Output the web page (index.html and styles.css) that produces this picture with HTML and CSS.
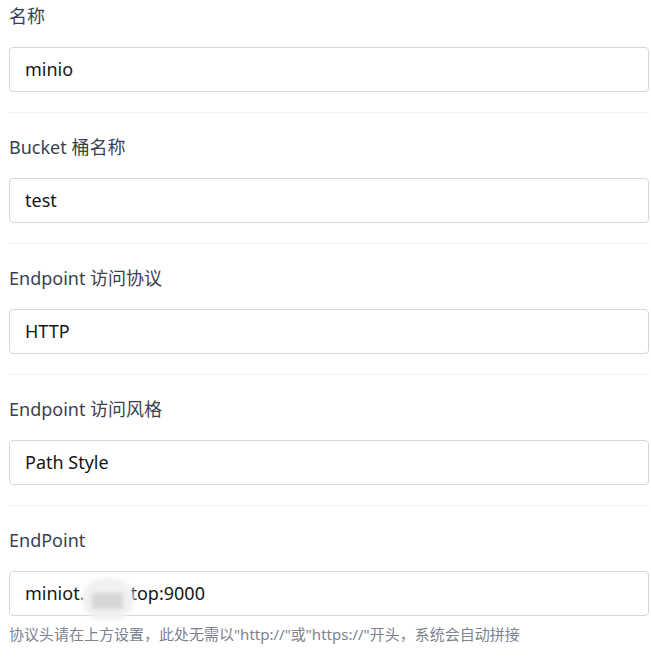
FILE: index.html
```html
<html>
<head>
  <meta charset="utf-8">
  <link rel="stylesheet" href="styles.css">
</head>
<body>
  <form class="storageForm">
    <div class="field">
      <label class="fieldLabel">名称</label>
      <div class="fieldInput">minio</div>
    </div>
    <div class="field">
      <label class="fieldLabel">Bucket 桶名称</label>
      <div class="fieldInput">test</div>
    </div>
    <div class="field">
      <label class="fieldLabel">Endpoint 访问协议</label>
      <div class="fieldInput">HTTP</div>
    </div>
    <div class="field">
      <label class="fieldLabel">Endpoint 访问风格</label>
      <div class="fieldInput">Path Style</div>
    </div>
    <div class="field last">
      <label class="fieldLabel">EndPoint</label>
      <div class="fieldInput">miniot.<span class="masked"><span class="maskBlock"></span></span>top:9000</div>
      <p class="fieldHelp">协议头请在上方设置，此处无需以"http://"或"https://"开头，系统会自动拼接</p>
    </div>
  </form>
</body>
</html>
```
FILE: styles.css
```css
html, body { margin: 0; padding: 0; background: #ffffff; }
body {
  font-family: "Noto Sans", "Noto Sans CJK SC", sans-serif;
}
.storageForm {
  padding: 2px 2px 0 9px;
}
.field {
  padding-bottom: 20px;
  border-bottom: 1px solid #f0f0f2;
  margin-bottom: 20px;
}
.field.last {
  border-bottom: none;
  padding-bottom: 0;
}
.fieldLabel {
  display: block;
  font-size: 18px;
  line-height: 28px;
  color: #3a4150;
  margin-bottom: 17px;
}
.fieldInput {
  box-sizing: border-box;
  height: 45px;
  border: 1px solid #d4d6dc;
  border-radius: 4px;
  padding: 0 15px;
  font-size: 18px;
  line-height: 43px;
  color: #161616;
  white-space: nowrap;
}
.masked {
  display: inline-block;
  position: relative;
  width: 46px;
  height: 43px;
  vertical-align: top;
}
.maskBlock {
  position: absolute;
  left: -2px;
  top: 6px;
  width: 52px;
  height: 42px;
  border-radius: 24px;
  background: #f1f1f1;
  filter: blur(2px);
}
.maskBlock::after {
  content: "";
  position: absolute;
  left: 10px;
  top: 15px;
  width: 31px;
  height: 16px;
  background: #d6d6d6;
}
.fieldHelp {
  margin: 7px 0 0;
  font-size: 15px;
  line-height: 22px;
  color: #7d8390;
}
```
